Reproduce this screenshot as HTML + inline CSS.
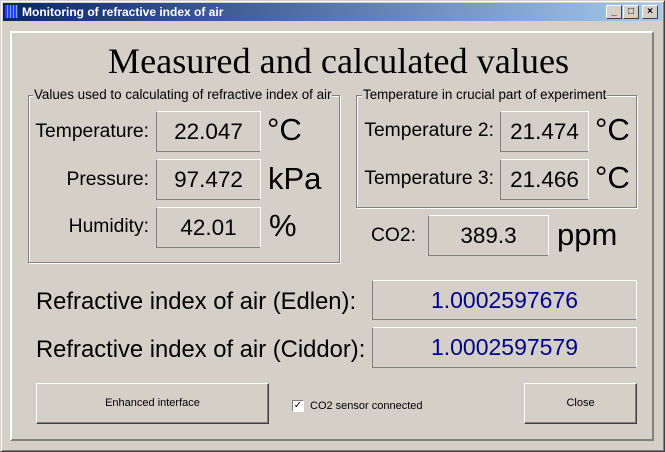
<!DOCTYPE html>
<html><head><style>
*{margin:0;padding:0;box-sizing:border-box}
body{width:665px;height:452px;background:#d4d0c8;position:relative;overflow:hidden;font-family:"Liberation Sans",sans-serif;color:#000}
.a{position:absolute}
.win{left:0;top:0;width:665px;height:452px;border:1px solid;border-color:#d4d0c8 #404040 #404040 #d4d0c8;box-shadow:inset 1px 1px #fff,inset -1px -1px #808080}
.tb{left:3px;top:3px;width:659px;height:18px;background:linear-gradient(to right,#0a246a,#a6caf0);color:#fff;font-size:12px;font-weight:bold;line-height:18px;padding-left:19px}
.btn{width:16px;height:14px;top:5px;background:#d4d0c8;border:1px solid;border-color:#fff #404040 #404040 #fff;font-size:10px;line-height:12px;text-align:center;color:#000;font-weight:bold}
.panel{left:10px;top:31px;width:644px;height:410px;border:2px solid;border-color:#fff #808080 #808080 #fff}
.gb{border:1px solid #808080;box-shadow:1px 1px #fff,inset 1px 1px #fff}
.gl{font-size:13.4px;background:#d4d0c8;padding:0 1px;line-height:13px}
.box{border:1px solid;border-color:#fff #fff #808080 #808080;text-align:center;font-size:22.5px}
.lbl{font-size:19.3px;text-align:right;line-height:24px}
.u{font-size:31px;line-height:36px}
.pb{border:1px solid;border-color:#fff #404040 #404040 #fff;box-shadow:inset -1px -1px #808080;font-size:11px;text-align:center}
</style></head><body>
<div class="a win"></div>
<div class="a tb">Monitoring of refractive index of air</div>
<div class="a" style="left:5px;top:5px;width:13px;height:13px;background:repeating-linear-gradient(90deg,#2040ff 0 2px,#80a0ff 2px 3px)"></div>
<div class="a btn" style="left:606px">_</div>
<div class="a btn" style="left:623px">□</div>
<div class="a btn" style="left:642px">×</div>
<div class="a panel"></div>
<div class="a" style="left:0;width:677px;top:38px;text-align:center;font-family:'Liberation Serif',serif;font-size:36.2px;line-height:46px">Measured and calculated values</div>

<div class="a gb" style="left:28px;top:95px;width:312px;height:168px"></div>
<div class="a gl" style="left:33px;top:88px">Values used to calculating of refractive index of air</div>
<div class="a gb" style="left:356px;top:95px;width:281px;height:113px"></div>
<div class="a gl" style="left:362px;top:88px">Temperature in crucial part of experiment</div>

<div class="a lbl" style="left:20px;width:129px;top:120px">Temperature:</div>
<div class="a box" style="left:156px;top:111px;width:105px;height:41px;line-height:39px">22.047</div>
<div class="a u" style="left:267px;top:112px">°C</div>
<div class="a lbl" style="left:20px;width:129px;top:168px">Pressure:</div>
<div class="a box" style="left:156px;top:159px;width:105px;height:41px;line-height:39px">97.472</div>
<div class="a u" style="left:268px;top:161px">kPa</div>
<div class="a lbl" style="left:20px;width:129px;top:215px">Humidity:</div>
<div class="a box" style="left:156px;top:207px;width:105px;height:41px;line-height:39px">42.01</div>
<div class="a u" style="left:269px;top:208px">%</div>

<div class="a lbl" style="left:350px;width:144px;top:119px">Temperature 2:</div>
<div class="a box" style="left:500px;top:111px;width:89px;height:41px;line-height:39px">21.474</div>
<div class="a u" style="left:595px;top:112px">°C</div>
<div class="a lbl" style="left:350px;width:144px;top:167px">Temperature 3:</div>
<div class="a box" style="left:500px;top:159px;width:89px;height:41px;line-height:39px">21.466</div>
<div class="a u" style="left:595px;top:160px">°C</div>

<div class="a lbl" style="left:350px;width:66px;top:224px">CO2:</div>
<div class="a box" style="left:428px;top:215px;width:121px;height:41px;line-height:39px">389.3</div>
<div class="a u" style="left:557px;top:217px">ppm</div>

<div class="a" style="left:36px;top:287px;font-size:23.8px;line-height:30px">Refractive index of air (Edlen):</div>
<div class="a box" style="left:372px;top:280px;width:265px;height:40px;line-height:38px;color:#00008b;font-size:23px">1.0002597676</div>
<div class="a" style="left:36px;top:335px;font-size:23.8px;line-height:30px">Refractive index of air (Ciddor):</div>
<div class="a box" style="left:372px;top:327px;width:265px;height:41px;line-height:39px;color:#00008b;font-size:23px">1.0002597579</div>

<div class="a pb" style="left:36px;top:383px;width:233px;height:41px;line-height:38px">Enhanced interface</div>
<div class="a pb" style="left:524px;top:383px;width:113px;height:41px;line-height:38px">Close</div>
<div class="a" style="left:292px;top:400px;width:12px;height:12px;background:#fff;border:1px solid;border-color:#808080 #fff #fff #808080;font-size:10px;line-height:10px;text-align:center">✓</div>
<div class="a" style="left:310px;top:400px;font-size:11px">CO2 sensor connected</div>
</body></html>
